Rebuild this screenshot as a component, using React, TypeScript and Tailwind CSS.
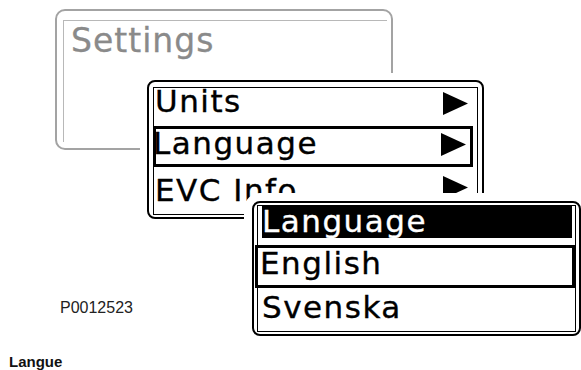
const menuFont =
  "font-['DejaVu_Sans',sans-serif] text-[31px] leading-[29px] tracking-[1.5px] whitespace-nowrap [-webkit-text-stroke:0.35px_currentColor]";

function Arrow() {
  return (
    <svg width="25" height="23" viewBox="0 0 25 23" className="block shrink-0">
      <polygon points="0,0 25,11.5 0,23" fill="#000" />
    </svg>
  );
}

function SettingsWindow() {
  return (
    <div className="absolute left-[55px] top-[9px] w-[338px] h-[141px] rounded-[10px] border-2 border-[#a3a3a3] bg-white pl-[6px] pt-[9px] pr-[4px] pb-[6px]">
      <div className="h-full border-l border-t border-[#b8b8b8]">
        <div className="pl-[7px] pt-[3px] font-['DejaVu_Sans',sans-serif] text-[33px] leading-[33px] tracking-[1px] text-[#8a8a8a] [-webkit-text-stroke:0.3px_#8a8a8a]">
          Settings
        </div>
      </div>
    </div>
  );
}

function MainMenu() {
  return (
    <div className="absolute left-[147px] top-[80px] w-[337px] h-[139px] rounded-[8px] border-2 border-black bg-white pl-[4px] pt-[5px] pr-[4px] pb-[2px] shadow-[0_0_0_7px_#fff]">
      <div className="h-full border border-black text-black">
        <div className="flex h-[38px] justify-between">
          <span className={`${menuFont} -mt-[1px] pl-[1px]`}>Units</span>
          <div className="mt-[4px] mr-[9px]">
            <Arrow />
          </div>
        </div>
        <div className="-ml-px mr-[4px] flex h-[41px] justify-between border-[3px] border-black">
          <span className={`${menuFont} -ml-[3px]`}>Language</span>
          <div className="mt-[4px] mr-[4px]">
            <Arrow />
          </div>
        </div>
        <div className="flex justify-between">
          <span className={`${menuFont} mt-[9px] pl-[1px]`}>EVC Info</span>
          <div className="mt-[9px] mr-[9px]">
            <Arrow />
          </div>
        </div>
      </div>
    </div>
  );
}

function LanguagePopup() {
  return (
    <div className="absolute left-[252px] top-[201px] w-[329px] h-[135px] rounded-[8px] border-2 border-black bg-white pl-[3px] pt-[2px] pr-[3px] pb-[2px] shadow-[0_0_0_8px_#fff]">
      <div className="h-full border border-black text-black">
        <div className="ml-[4px] mr-[3px] h-[32px] bg-black pt-[1px] text-white">
          <span className={`${menuFont} block`}>Language</span>
        </div>
        <div className="-ml-[3px] mt-[7px] h-[43px] border-[3px] border-black pt-[1px]">
          <span className={`${menuFont} block pl-[2px]`}>English</span>
        </div>
        <div className={`${menuFont} mt-[5px] pl-[4px]`}>Svenska</div>
      </div>
    </div>
  );
}

export default function App() {
  return (
    <div className="w-[581px] h-[370px] overflow-hidden bg-white">
      <div className="relative h-[354px]">
        <SettingsWindow />
        <MainMenu />
        <LanguagePopup />
        <span className="absolute left-[60px] top-[300px] font-['Liberation_Sans',Arial,sans-serif] text-[16px] leading-[16px] text-[#222]">
          P0012523
        </span>
      </div>
      <div className="pl-[9px] font-['Liberation_Sans',Arial,sans-serif] text-[15px] leading-[15px] font-bold text-[#111]">
        Langue
      </div>
    </div>
  );
}
